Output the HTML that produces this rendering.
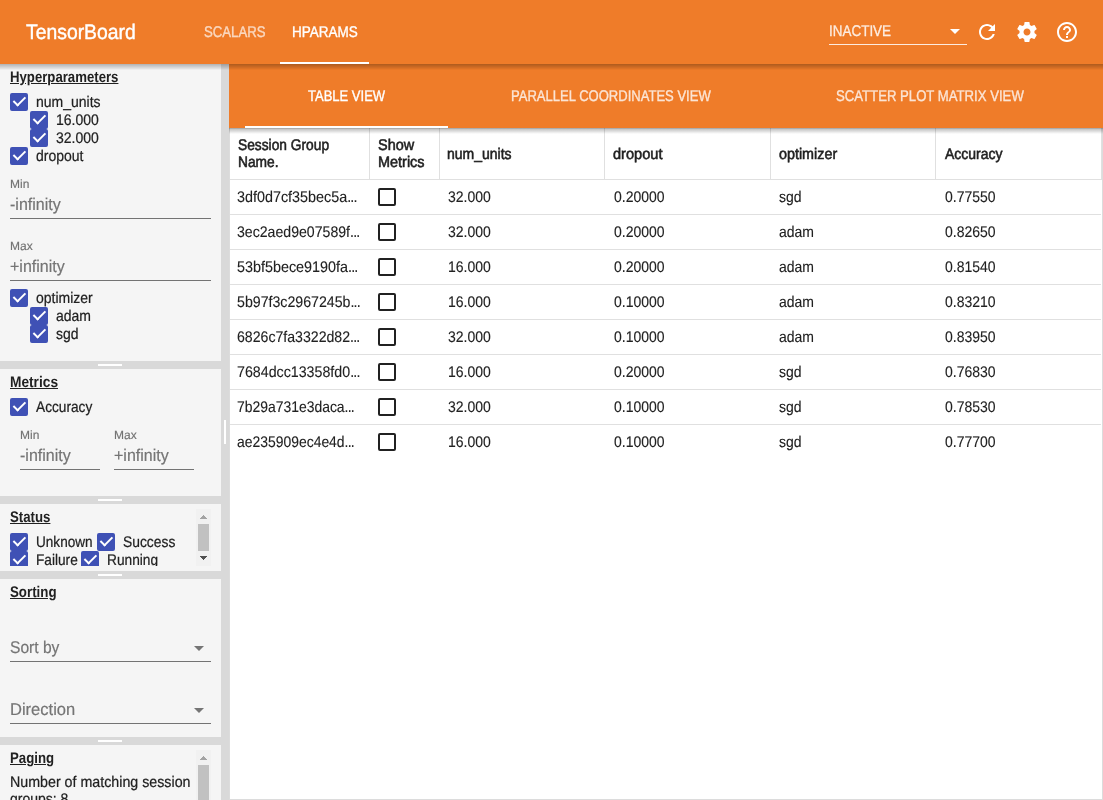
<!DOCTYPE html>
<html>
<head>
<meta charset="utf-8">
<title>TensorBoard</title>
<style>
*{margin:0;padding:0;box-sizing:border-box}
html,body{width:1103px;height:800px;overflow:hidden;background:#fff}
body{font-family:"Liberation Sans",sans-serif;text-rendering:geometricPrecision;font-size:14px;color:#212121;position:relative}
#header,#sidebar,#main{will-change:transform}
#title{transform-origin:0 79%}
.tab,.stab,#reload,.h,.t{transform-origin:0 50%;margin-top:1px}
.lbl{transform-origin:0 50%}
.inp{transform-origin:0 50%;margin-top:1px}
/* ---------- top header ---------- */
#header{position:absolute;left:0;top:0;width:1103px;height:64px;background:#ef7c29;color:#fff;z-index:5}
#hshadow{position:absolute;left:0;top:64px;width:1103px;height:6px;background:linear-gradient(rgba(0,0,0,.27),rgba(0,0,0,.17) 40%,rgba(0,0,0,.05) 85%,rgba(0,0,0,0));z-index:6}
#title{position:absolute;-webkit-text-stroke:.42px #fff;left:26px;top:21px;font-size:21px;line-height:24px;white-space:nowrap}
.tab{position:absolute;top:24px;font-size:15.4px;line-height:16px;white-space:nowrap;-webkit-text-stroke:.35px #fff}
.tab.off{opacity:.7}
.ink{position:absolute;background:#fff;height:2px}
#reload{position:absolute;-webkit-text-stroke:.3px rgba(255,255,255,.82);left:829px;top:22.5px;font-size:15.4px;line-height:16px;color:rgba(255,255,255,.82)}
#reloadline{position:absolute;left:829px;top:44px;width:138px;height:1px;background:rgba(255,255,255,.85)}
.tri{position:absolute;width:0;height:0;border-left:5px solid transparent;border-right:5px solid transparent;border-top:5px solid #fff}
.ico{position:absolute;top:20px;width:24px;height:24px;fill:#fff}
/* ---------- sidebar ---------- */
#sidebar{position:absolute;left:0;top:64px;width:221px;height:736px;background:#f5f5f5;overflow:hidden}
#vsplit{position:absolute;left:221px;top:64px;width:8px;height:736px;background:#d9d9d9}
#vsplit i{position:absolute;left:3px;top:356px;width:2px;height:24px;background:#fff}
.hsplit{position:absolute;left:0;width:221px;height:8px;background:#d9d9d9}
.hsplit i{position:absolute;left:98px;top:3px;width:24px;height:2px;background:#fff}
.sec{position:absolute;left:0;width:221px;overflow:hidden}
.h{position:absolute;left:10px;font-weight:bold;font-size:15.4px;line-height:18px;text-decoration:underline;white-space:nowrap}
.t{position:absolute;-webkit-text-stroke:.22px #212121;font-size:15.4px;line-height:18px;white-space:nowrap}
.lbl{position:absolute;-webkit-text-stroke:.15px #737373;font-size:12px;line-height:14px;color:#737373;white-space:nowrap}
.inp{position:absolute;-webkit-text-stroke:.2px #757575;font-size:17px;line-height:20px;color:#757575;white-space:nowrap}
.ul{position:absolute;height:1px;background:#737373}
.cb{position:absolute;width:18px;height:18px;border:2px solid #3f51b5;border-radius:2px;background:#3f51b5}
.cb::after{content:"";position:absolute;left:0;top:0;width:36%;height:70%;border-style:solid;border-color:#fff;border-width:0 2.4px 2.4px 0;transform-origin:97% 86%;transform:rotate(45deg);box-sizing:content-box}
.dd{position:absolute;width:0;height:0;border-left:5px solid transparent;border-right:5px solid transparent;border-top:5px solid #757575}
.sb{position:absolute;left:196px;width:15px;background:#f1f1f1}
.sb .th{position:absolute;left:2px;width:11px;background:#c1c1c1}
.sb svg{position:absolute;left:4px;width:7px;height:4px;shape-rendering:crispEdges}
/* ---------- main ---------- */
#sshadow{position:absolute;left:-1px;top:0;width:874px;height:6px;background:linear-gradient(rgba(0,0,0,.4),rgba(0,0,0,.22) 20%,rgba(0,0,0,.14) 50%,rgba(0,0,0,.04) 85%,rgba(0,0,0,0));z-index:2}
#main{position:absolute;left:229px;top:64px;width:874px;height:736px;background:#fff}
#tblwrap{position:absolute;left:0;top:64px;width:874px;height:672px;border:1px solid #dcdcdc;border-top:none}
#subtabs{position:absolute;left:0;top:0;width:874px;height:64px;background:#ef7c29;color:#fff}
.stab{position:absolute;top:24px;font-size:15.4px;line-height:16px;white-space:nowrap;-webkit-text-stroke:.35px #fff}
.stab.off{opacity:.8}
table{position:absolute;left:0;top:0;border-collapse:collapse;table-layout:fixed;width:871px}
th{height:51px;text-align:left;font-weight:normal;-webkit-text-stroke:.55px #212121;font-size:15.4px;line-height:17px;padding:2px 8px 0;border-right:1px solid #e0e0e0;border-bottom:1px solid #e0e0e0;vertical-align:middle}
td{height:35px;-webkit-text-stroke:.12px #212121;font-size:15.4px;line-height:18px;padding:0 8px;border-bottom:1px solid #e0e0e0;white-space:nowrap;vertical-align:middle}
th span,td span{display:inline-block;transform-origin:0 50%}
td span{position:relative;top:1px}
tr:last-child td{border-bottom:none}
td i{font-style:normal;letter-spacing:-.9px}
td:nth-child(1){padding-left:7px}td:nth-child(2){padding-left:9px}td:nth-child(3){padding-left:8.5px}td:nth-child(4){padding-left:9.5px}td:nth-child(5){padding-left:9px}td:nth-child(6){padding-left:10px}th:nth-child(6){padding-left:9px}th:nth-child(3){padding-left:7px}
.ck{display:block;width:18px;height:18px;border:2px solid #212121;border-radius:2px}
</style>
</head>
<body>
<div id="header">
  <div id="title" style="transform:scaleX(.922)">TensorBoard</div>
  <div class="tab off" style="left:204px;transform:scaleX(0.8563)">SCALARS</div>
  <div class="tab" style="left:292px;transform:scaleX(0.879)">HPARAMS</div>
  <div class="ink" style="left:280px;top:62px;width:89px"></div>
  <div id="reload" style="transform:scaleX(0.8745)">INACTIVE</div>
  <div id="reloadline"></div>
  <div class="tri" style="left:950px;top:29px"></div>
  <svg class="ico" style="left:975px" viewBox="0 0 24 24"><path d="M17.65 6.35C16.2 4.9 14.21 4 12 4c-4.42 0-7.99 3.58-7.99 8s3.57 8 7.99 8c3.73 0 6.84-2.55 7.73-6h-2.08c-.82 2.33-3.04 4-5.65 4-3.31 0-6-2.69-6-6s2.69-6 6-6c1.66 0 3.14.69 4.22 1.78L13 11h7V4l-2.35 2.35z"/></svg>
  <svg class="ico" style="left:1015px" viewBox="0 0 24 24"><path d="M19.43 12.98c.04-.32.07-.64.07-.98s-.03-.66-.07-.98l2.11-1.65c.19-.15.24-.42.12-.64l-2-3.46c-.12-.22-.39-.3-.61-.22l-2.49 1c-.52-.4-1.08-.73-1.69-.98l-.38-2.65C14.46 2.18 14.25 2 14 2h-4c-.25 0-.46.18-.49.42l-.38 2.65c-.61.25-1.17.59-1.69.98l-2.49-1c-.23-.09-.49 0-.61.22l-2 3.46c-.13.22-.07.49.12.64l2.11 1.65c-.04.32-.07.65-.07.98s.03.66.07.98l-2.11 1.65c-.19.15-.24.42-.12.64l2 3.46c.12.22.39.3.61.22l2.49-1c.52.4 1.08.73 1.69.98l.38 2.65c.03.24.24.42.49.42h4c.25 0 .46-.18.49-.42l.38-2.65c.61-.25 1.17-.59 1.69-.98l2.49 1c.23.09.49 0 .61-.22l2-3.46c.12-.22.07-.49-.12-.64l-2.11-1.65zM12 15.5c-1.93 0-3.5-1.57-3.5-3.5s1.57-3.5 3.5-3.5 3.5 1.57 3.5 3.5-1.57 3.5-3.5 3.5z"/></svg>
  <svg class="ico" style="left:1055px" viewBox="0 0 24 24"><path d="M11 18h2v-2h-2v2zm1-16C6.480 2 2 6.480 2 12s4.480 10 10 10 10-4.480 10-10S17.520 2 12 2zm0 18c-4.410 0-8-3.590-8-8s3.590-8 8-8 8 3.590 8 8-3.590 8-8 8zm0-14c-2.210 0-4 1.790-4 4h2c0-1.100.9-2 2-2s2 .9 2 2c0 2-3 1.750-3 5h2c0-2.250 3-2.500 3-5 0-2.210-1.790-4-4-4z"/></svg>
</div>
<div id="hshadow"></div>

<div id="sidebar">
  <div class="sec" style="top:0;height:297px">
    <div class="h" style="top:4px;transform:scaleX(0.8563)">Hyperparameters</div>
    <div class="cb" style="left:10px;top:29px"></div><div class="t" style="left:36px;top:29px;transform:scaleX(0.909)">num_units</div>
    <div class="cb" style="left:30px;top:47px"></div><div class="t" style="left:56px;top:47px;transform:scaleX(0.909)">16.000</div>
    <div class="cb" style="left:30px;top:65px"></div><div class="t" style="left:56px;top:65px;transform:scaleX(0.909)">32.000</div>
    <div class="cb" style="left:10px;top:83px"></div><div class="t" style="left:36px;top:83px;transform:scaleX(0.909)">dropout</div>
    <div class="lbl" style="left:10px;top:113px">Min</div>
    <div class="inp" style="left:10px;top:130px;transform:scaleX(0.9412)">-infinity</div>
    <div class="ul" style="left:10px;top:154px;width:201px"></div>
    <div class="lbl" style="left:10px;top:175px">Max</div>
    <div class="inp" style="left:10px;top:192px;transform:scaleX(0.9412)">+infinity</div>
    <div class="ul" style="left:10px;top:216px;width:201px"></div>
    <div class="cb" style="left:10px;top:225px"></div><div class="t" style="left:36px;top:225px;transform:scaleX(0.909)">optimizer</div>
    <div class="cb" style="left:30px;top:243px"></div><div class="t" style="left:56px;top:243px;transform:scaleX(0.909)">adam</div>
    <div class="cb" style="left:30px;top:261px"></div><div class="t" style="left:56px;top:261px;transform:scaleX(0.909)">sgd</div>
  </div>
  <div class="hsplit" style="top:297px"><i></i></div>
  <div class="sec" style="top:305px;height:127px">
    <div class="h" style="top:4px;transform:scaleX(0.8908)">Metrics</div>
    <div class="cb" style="left:10px;top:29px"></div><div class="t" style="left:36px;top:29px;transform:scaleX(0.889)">Accuracy</div>
    <div class="lbl" style="left:20px;top:59px">Min</div>
    <div class="lbl" style="left:114px;top:59px">Max</div>
    <div class="inp" style="left:20px;top:76px;transform:scaleX(0.9412)">-infinity</div>
    <div class="inp" style="left:114px;top:76px;transform:scaleX(0.9412)">+infinity</div>
    <div class="ul" style="left:20px;top:100px;width:80px"></div>
    <div class="ul" style="left:114px;top:100px;width:80px"></div>
  </div>
  <div class="hsplit" style="top:432px"><i></i></div>
  <div class="sec" style="top:440px;height:67px">
    <div class="sec" style="top:5px;height:57px">
      <div class="h" style="top:-1px;transform:scaleX(0.859)">Status</div>
      <div class="cb" style="left:10px;top:24px"></div><div class="t" style="left:36px;top:24px;transform:scaleX(0.8817)">Unknown</div>
      <div class="cb" style="left:97px;top:24px"></div><div class="t" style="left:123px;top:24px;transform:scaleX(0.8999)">Success</div>
      <div class="cb" style="left:10px;top:42px"></div><div class="t" style="left:36px;top:42px;transform:scaleX(0.8872)">Failure</div>
      <div class="cb" style="left:81px;top:42px"></div><div class="t" style="left:107px;top:42px;transform:scaleX(0.8917)">Running</div>
      <div class="sb" style="top:0;height:57px"><svg style="top:6px" viewBox="0 0 7 4"><path fill="#a3a3a3" d="M3 0h1v1h1v1h1v1h1v1h-7v-1h1v-1h1v-1h1z"/></svg><i class="th" style="top:15px;height:27px"></i><svg style="top:47px" viewBox="0 0 7 4"><path fill="#505050" d="M0 0h7v1h-1v1h-1v1h-1v1h-1v-1h-1v-1h-1v-1h-1z"/></svg></div>
    </div>
  </div>
  <div class="hsplit" style="top:507px"><i></i></div>
  <div class="sec" style="top:515px;height:158px">
    <div class="h" style="top:4px;transform:scaleX(0.8636)">Sorting</div>
    <div class="inp" style="left:10px;top:573px;top:58px;transform:scaleX(0.9177)">Sort by</div>
    <div class="dd" style="left:194px;top:582px;top:67px"></div>
    <div class="ul" style="left:10px;top:82px;width:201px"></div>
    <div class="inp" style="left:10px;top:120px;transform:scaleX(0.9723)">Direction</div>
    <div class="dd" style="left:194px;top:129px"></div>
    <div class="ul" style="left:10px;top:144px;width:201px"></div>
  </div>
  <div class="hsplit" style="top:673px"><i></i></div>
  <div class="sec" style="top:681px;height:55px">
    <div class="sec" style="top:5px;height:50px">
      <div class="h" style="top:-1px;transform:scaleX(0.8581)">Paging</div>
      <div class="t" style="left:10px;top:23px;transform:scaleX(0.9254)">Number of matching session</div>
      <div class="t" style="left:10px;top:40px;transform:scaleX(0.909)">groups: 8</div>
      <div class="sb" style="top:0;height:50px"><svg style="top:6px" viewBox="0 0 7 4"><path fill="#a3a3a3" d="M3 0h1v1h1v1h1v1h1v1h-7v-1h1v-1h1v-1h1z"/></svg><i class="th" style="top:15px;height:40px"></i></div>
    </div>
  </div>
</div>
<div id="vsplit"><i></i></div>

<div id="main">
  <div id="subtabs">
    <div class="stab" style="left:79px;transform:scaleX(0.8454)">TABLE VIEW</div>
    <div class="stab off" style="left:282px;transform:scaleX(0.8472)">PARALLEL COORDINATES VIEW</div>
    <div class="stab off" style="left:607px;transform:scaleX(0.8545)">SCATTER PLOT MATRIX VIEW</div>
    <div class="ink" style="left:16px;top:62px;width:203px"></div>
  </div>
  <div id="tblwrap">
  <div id="sshadow"></div>
  <table>
    <colgroup><col style="width:139px"><col style="width:70px"><col style="width:165px"><col style="width:166px"><col style="width:165px"><col style="width:166px"></colgroup>
    <thead><tr><th><span style=";transform:scaleX(0.8945)">Session Group Name.</span></th><th><span style=";transform:scaleX(0.939)">Show Metrics</span></th><th><span style=";transform:scaleX(0.909)">num_units</span></th><th><span style=";transform:scaleX(0.9481)">dropout</span></th><th><span style=";transform:scaleX(0.9317)">optimizer</span></th><th><span style=";transform:scaleX(0.909)">Accuracy</span></th></tr></thead>
    <tbody>
      <tr><td><span style="transform:scaleX(0.9326)">3df0d7cf35bec5a<i>...</i></span></td><td><i class="ck"></i></td><td><span style="transform:scaleX(0.909)">32.000</span></td><td><span style="transform:scaleX(0.909)">0.20000</span></td><td><span style="transform:scaleX(0.909)">sgd</span></td><td><span style="transform:scaleX(0.909)">0.77550</span></td></tr>
      <tr><td><span style="transform:scaleX(0.9172)">3ec2aed9e07589f<i>...</i></span></td><td><i class="ck"></i></td><td><span style="transform:scaleX(0.909)">32.000</span></td><td><span style="transform:scaleX(0.909)">0.20000</span></td><td><span style="transform:scaleX(0.909)">adam</span></td><td><span style="transform:scaleX(0.909)">0.82650</span></td></tr>
      <tr><td><span style="transform:scaleX(0.9335)">53bf5bece9190fa<i>...</i></span></td><td><i class="ck"></i></td><td><span style="transform:scaleX(0.909)">16.000</span></td><td><span style="transform:scaleX(0.909)">0.20000</span></td><td><span style="transform:scaleX(0.909)">adam</span></td><td><span style="transform:scaleX(0.909)">0.81540</span></td></tr>
      <tr><td><span style="transform:scaleX(0.9208)">5b97f3c2967245b<i>...</i></span></td><td><i class="ck"></i></td><td><span style="transform:scaleX(0.909)">16.000</span></td><td><span style="transform:scaleX(0.909)">0.10000</span></td><td><span style="transform:scaleX(0.909)">adam</span></td><td><span style="transform:scaleX(0.909)">0.83210</span></td></tr>
      <tr><td><span style="transform:scaleX(0.9172)">6826c7fa3322d82<i>...</i></span></td><td><i class="ck"></i></td><td><span style="transform:scaleX(0.909)">32.000</span></td><td><span style="transform:scaleX(0.909)">0.10000</span></td><td><span style="transform:scaleX(0.909)">adam</span></td><td><span style="transform:scaleX(0.909)">0.83950</span></td></tr>
      <tr><td><span style="transform:scaleX(0.9245)">7684dcc13358fd0<i>...</i></span></td><td><i class="ck"></i></td><td><span style="transform:scaleX(0.909)">16.000</span></td><td><span style="transform:scaleX(0.909)">0.20000</span></td><td><span style="transform:scaleX(0.909)">sgd</span></td><td><span style="transform:scaleX(0.909)">0.76830</span></td></tr>
      <tr><td><span style="transform:scaleX(0.9045)">7b29a731e3daca<i>...</i></span></td><td><i class="ck"></i></td><td><span style="transform:scaleX(0.909)">32.000</span></td><td><span style="transform:scaleX(0.909)">0.10000</span></td><td><span style="transform:scaleX(0.909)">sgd</span></td><td><span style="transform:scaleX(0.909)">0.78530</span></td></tr>
      <tr><td><span style="transform:scaleX(0.9045)">ae235909ec4e4d<i>...</i></span></td><td><i class="ck"></i></td><td><span style="transform:scaleX(0.909)">16.000</span></td><td><span style="transform:scaleX(0.909)">0.10000</span></td><td><span style="transform:scaleX(0.909)">sgd</span></td><td><span style="transform:scaleX(0.909)">0.77700</span></td></tr>
    </tbody>
  </table>
  </div>
</div>
</body>
</html>
